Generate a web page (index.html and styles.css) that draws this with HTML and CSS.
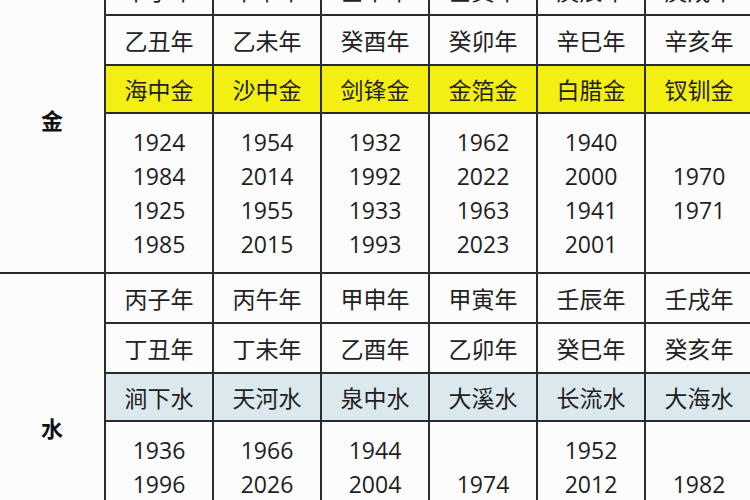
FILE: index.html
```html
<!DOCTYPE html>
<html lang="zh">
<head>
<meta charset="utf-8">
<link rel="stylesheet" href="styles.css">
</head>
<body>
<table class="nayin">
  <colgroup>
    <col class="c-label">
    <col class="c"><col class="c"><col class="c"><col class="c"><col class="c"><col class="c">
  </colgroup>
  <tbody class="group">
    <tr class="r-gz">
      <td class="label" rowspan="4">金</td>
      <td>甲子年</td><td>甲午年</td><td>壬申年</td><td>壬寅年</td><td>庚辰年</td><td>庚戌年</td>
    </tr>
    <tr class="r-gz">
      <td>乙丑年</td><td>乙未年</td><td>癸酉年</td><td>癸卯年</td><td>辛巳年</td><td>辛亥年</td>
    </tr>
    <tr class="r-name gold">
      <td>海中金</td><td>沙中金</td><td>剑锋金</td><td>金箔金</td><td>白腊金</td><td>钗钏金</td>
    </tr>
    <tr class="r-years">
      <td>1924<br>1984<br>1925<br>1985</td>
      <td>1954<br>2014<br>1955<br>2015</td>
      <td>1932<br>1992<br>1933<br>1993</td>
      <td>1962<br>2022<br>1963<br>2023</td>
      <td>1940<br>2000<br>1941<br>2001</td>
      <td>1970<br>1971</td>
    </tr>
  </tbody>
  <tbody class="group">
    <tr class="r-gz">
      <td class="label" rowspan="4">水</td>
      <td>丙子年</td><td>丙午年</td><td>甲申年</td><td>甲寅年</td><td>壬辰年</td><td>壬戌年</td>
    </tr>
    <tr class="r-gz">
      <td>丁丑年</td><td>丁未年</td><td>乙酉年</td><td>乙卯年</td><td>癸巳年</td><td>癸亥年</td>
    </tr>
    <tr class="r-name water">
      <td>涧下水</td><td>天河水</td><td>泉中水</td><td>大溪水</td><td>长流水</td><td>大海水</td>
    </tr>
    <tr class="r-years">
      <td>1936<br>1996<br>1937<br>1997</td>
      <td>1966<br>2026<br>1967<br>2027</td>
      <td>1944<br>2004<br>1945<br>2005</td>
      <td>1974<br>1975</td>
      <td>1952<br>2012<br>1953<br>2013</td>
      <td>1982<br>1983</td>
    </tr>
  </tbody>
</table>
</body>
</html>
```
FILE: styles.css
```css
html, body {
  margin: 0;
  padding: 0;
  background: #fcfcfc;
  overflow: hidden;
  width: 750px;
  height: 500px;
}

.nayin {
  border-collapse: collapse;
  table-layout: fixed;
  width: 754px;
  margin-top: -36px;
  font-family: "Noto Sans CJK SC", "Noto Sans", sans-serif;
  color: #222;
}

.c-label { width: 105px; }
.c { width: 108px; }

.nayin td {
  border: 2px solid #2b2b2b;
  text-align: center;
  vertical-align: middle;
  padding: 0;
  font-size: 23px;
  line-height: 30px;
}

.nayin td.label {
  border-left: none;
  font-weight: bold;
  font-size: 22px;
  color: #111;
}

.group {
  border-top: 2px solid #2b2b2b;
}

.r-gz td { height: 48px; }
.r-name td { height: 46px; }

.gold td:not(.label) { background: #f4ef12; }
.water td:not(.label) { background: #dbe9ee; }

.r-years td {
  height: 158px;
  font-family: "Open Sans", "Noto Sans", sans-serif;
  font-size: 23px;
  line-height: 34px;
  color: #1e1e1e;
}
```
